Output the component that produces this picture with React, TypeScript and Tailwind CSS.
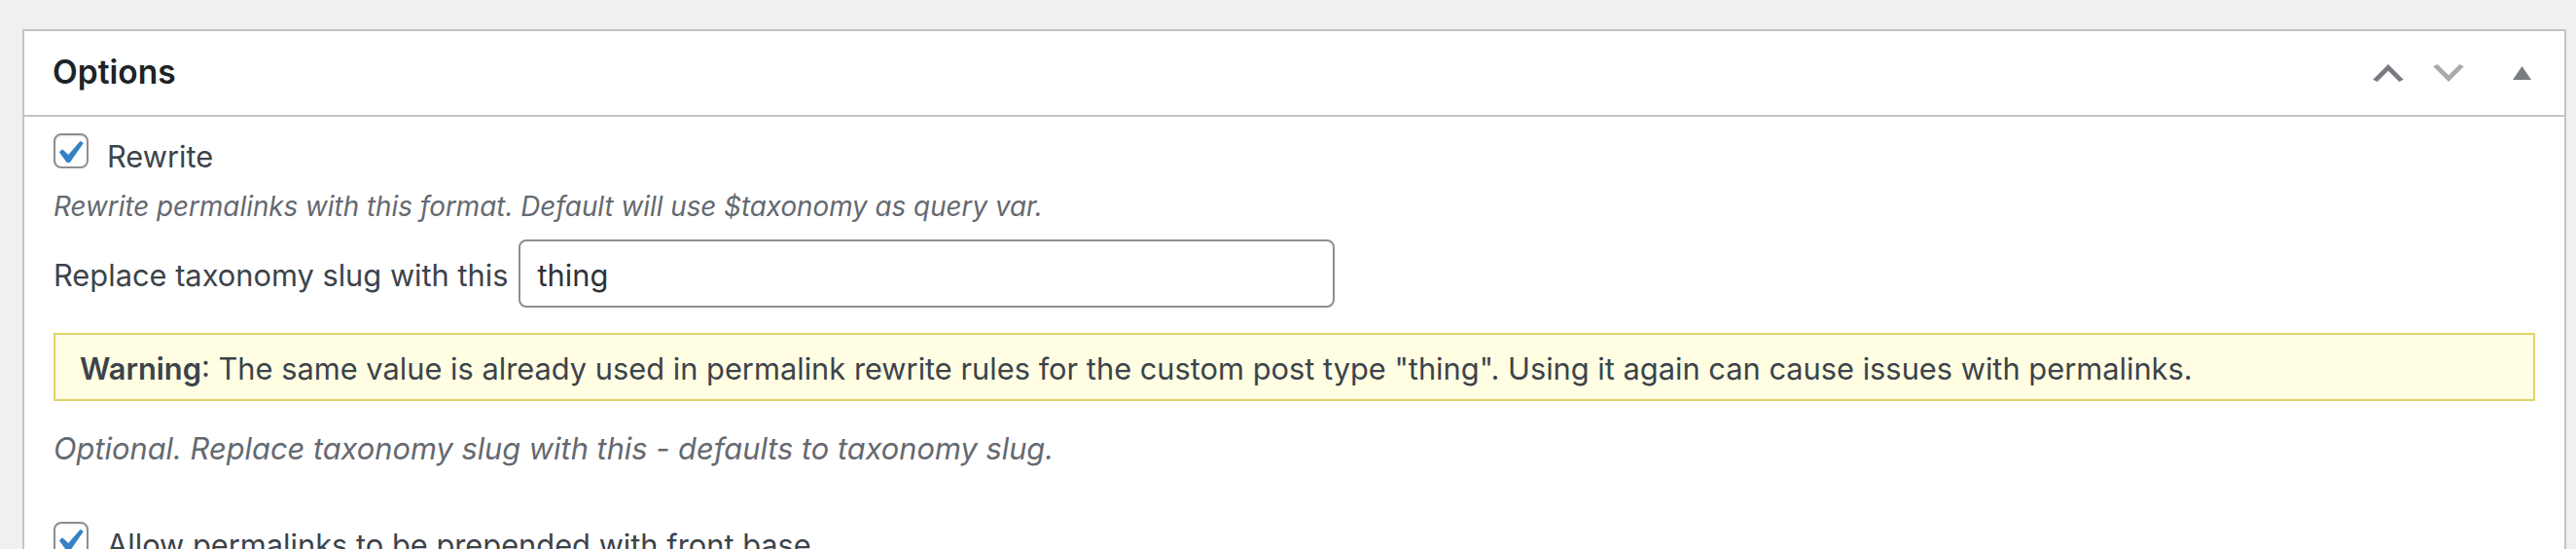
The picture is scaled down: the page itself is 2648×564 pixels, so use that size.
import React from "react";

const font = { fontFamily: "Inter, 'Noto Sans', 'Liberation Sans', sans-serif" };

// WordPress-style checked checkbox
const CheckBox = () => (
  <span className="block w-[36px] h-[36px] shrink-0 rounded-[8px] border-2 border-[#8c8f94] bg-white shadow-[inset_0_1px_2px_rgba(0,0,0,0.1)]">
    <svg viewBox="0 0 20 20" className="block w-[48px] h-[48px] -ml-[10px] -mt-[6px]">
      <path d="M14.83 4.89l1.34.94-5.81 8.38H9.02L5.78 9.67l1.34-1.25 2.57 2.4z" fill="#3582c4" />
    </svg>
  </span>
);

const HeaderActions = () => (
  <div className="flex items-center h-full">
    <button className="w-[62px] h-full flex items-center justify-center">
      <svg viewBox="3 6 14 8" className="w-[32px] h-[18px]">
        <path d="M15 14l-5-5-5 5-2-1 7-7 7 7z" fill="#787c82" />
      </svg>
    </button>
    <button className="w-[62px] h-full flex items-center justify-center">
      <svg viewBox="3 6 14 8" className="w-[32px] h-[18px]">
        <path d="M5 6l5 5 5-5 2 1-7 7-7-7z" fill="#a7aaad" />
      </svg>
    </button>
    <button className="w-[88px] h-full flex items-center justify-center">
      <svg viewBox="0 0 19 14" className="w-[19px] h-[14px]">
        <polygon points="0,14 9.5,0 19,14" fill="#787c82" />
      </svg>
    </button>
  </div>
);

export default function App() {
  return (
    <div className="h-[564px] overflow-hidden bg-[#f0f0f1] pt-[30px] pl-[23px] pr-[10px]" style={font}>
      <div className="border-2 border-[#c3c4c7] bg-white">
        {/* header */}
        <div className="h-[88px] flex items-center justify-between border-b-2 border-[#c3c4c7]">
          <h2 className="pl-[29px] mb-[2px] text-[33.5px] leading-[40px] font-semibold text-[#1d2327]">Options</h2>
          <HeaderActions />
        </div>

        {/* inside */}
        <div className="px-[30px] pb-[20px] text-[30.8px] text-[#3c434a]">
          <div className="mt-[17px] flex items-start h-[37px]">
            <CheckBox />
            <span className="ml-[19px] leading-[40px] mt-[4px]">Rewrite</span>
          </div>
          <p className="mt-[18px] text-[27.8px] leading-[40px] italic text-[#646970]">
            Rewrite permalinks with this format. Default will use $taxonomy as query var.
          </p>
          <div className="mt-[14px] flex items-center">
            <label className="leading-[40px] mt-[4px]">Replace taxonomy slug with this</label>
            <div className="ml-[10px] w-[839px] h-[70px] rounded-[8px] border-2 border-[#8c8f94] flex items-center pl-[18px] pt-[4px] text-[#2c3338]">
              thing
            </div>
          </div>
          <div className="mt-[26px] h-[70px] border-2 border-[#dfd46a] bg-[#fffee3] flex items-center px-[25px] pt-[3px]">
            <p className="leading-[40px]">
              <strong className="font-semibold">Warning</strong>: The same value is already used in permalink rewrite rules for the custom post type "thing". Using it again can cause issues with permalinks.
            </p>
          </div>
          <p className="mt-[29px] leading-[40px] italic text-[#646970]">
            Optional. Replace taxonomy slug with this - defaults to taxonomy slug.
          </p>
          <div className="mt-[55px] flex items-start h-[37px]">
            <CheckBox />
            <span className="ml-[19px] leading-[40px] mt-[4px]">Allow permalinks to be prepended with front base</span>
          </div>
        </div>
      </div>
    </div>
  );
}
